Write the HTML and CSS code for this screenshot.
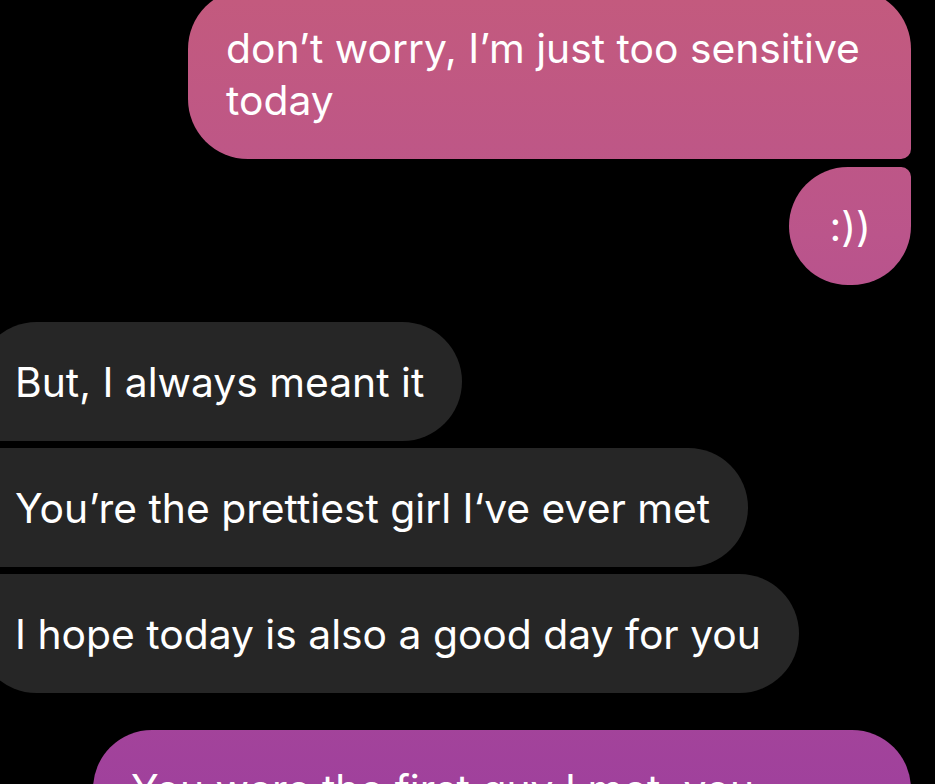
FILE: index.html
```html
<!DOCTYPE html>
<html lang="en">
<head>
<meta charset="utf-8">
<title>Chat</title>
<link rel="stylesheet" href="styles.css">
</head>
<body>
<main class="thread">
  <div class="group sent">
    <div class="bubble out first wrap">don’t worry, I’m just too sensitive<br>today</div>
    <div class="bubble out last">:))</div>
  </div>
  <div class="group received">
    <div class="bubble in first">But, I always meant it</div>
    <div class="bubble in mid">You’re the prettiest girl I‘ve ever met</div>
    <div class="bubble in last">I hope today is also a good day for you</div>
  </div>
  <div class="group sent">
    <div class="bubble out first full">You were the first guy I met, you</div>
  </div>
</main>
</body>
</html>
```
FILE: styles.css
```css
html, body {
  margin: 0;
  padding: 0;
  background: #000;
  height: 100%;
  overflow: hidden;
}
.thread {
  display: flex;
  flex-direction: column;
  gap: 37px;
  margin-top: -11px;
  font-family: Inter, "Noto Sans", sans-serif;
  font-size: 40.8px;
  line-height: 52px;
  color: #fff;
}
.group {
  display: flex;
  flex-direction: column;
  gap: 7px;
}
.group.sent {
  align-items: flex-end;
  padding-right: 24px;
  gap: 8px;
}
.group.received {
  align-items: flex-start;
  margin-left: -23px;
}
.bubble {
  box-sizing: border-box;
  max-width: 818px;
  padding: 33.5px 38px;
  border-radius: 60px;
  white-space: nowrap;
}
.bubble.full { width: 818px; }
.bubble.wrap { width: 723px; }
.bubble.out {
  background: linear-gradient(180deg, #c35a7e 0%, #bb558b 30%, #a0419c 100%);
  background-attachment: fixed;
}
.bubble.out.first { border-bottom-right-radius: 10px; padding-top: 33px; padding-bottom: 33px; }
.bubble.out.last { border-top-right-radius: 10px; padding: 33px 40px; }
.bubble.in {
  background: #262626;
  max-width: none;
}
.bubble.in.first { border-bottom-left-radius: 10px; }
.bubble.in.mid { border-top-left-radius: 10px; border-bottom-left-radius: 10px; }
.bubble.in.last { border-top-left-radius: 10px; }
```
